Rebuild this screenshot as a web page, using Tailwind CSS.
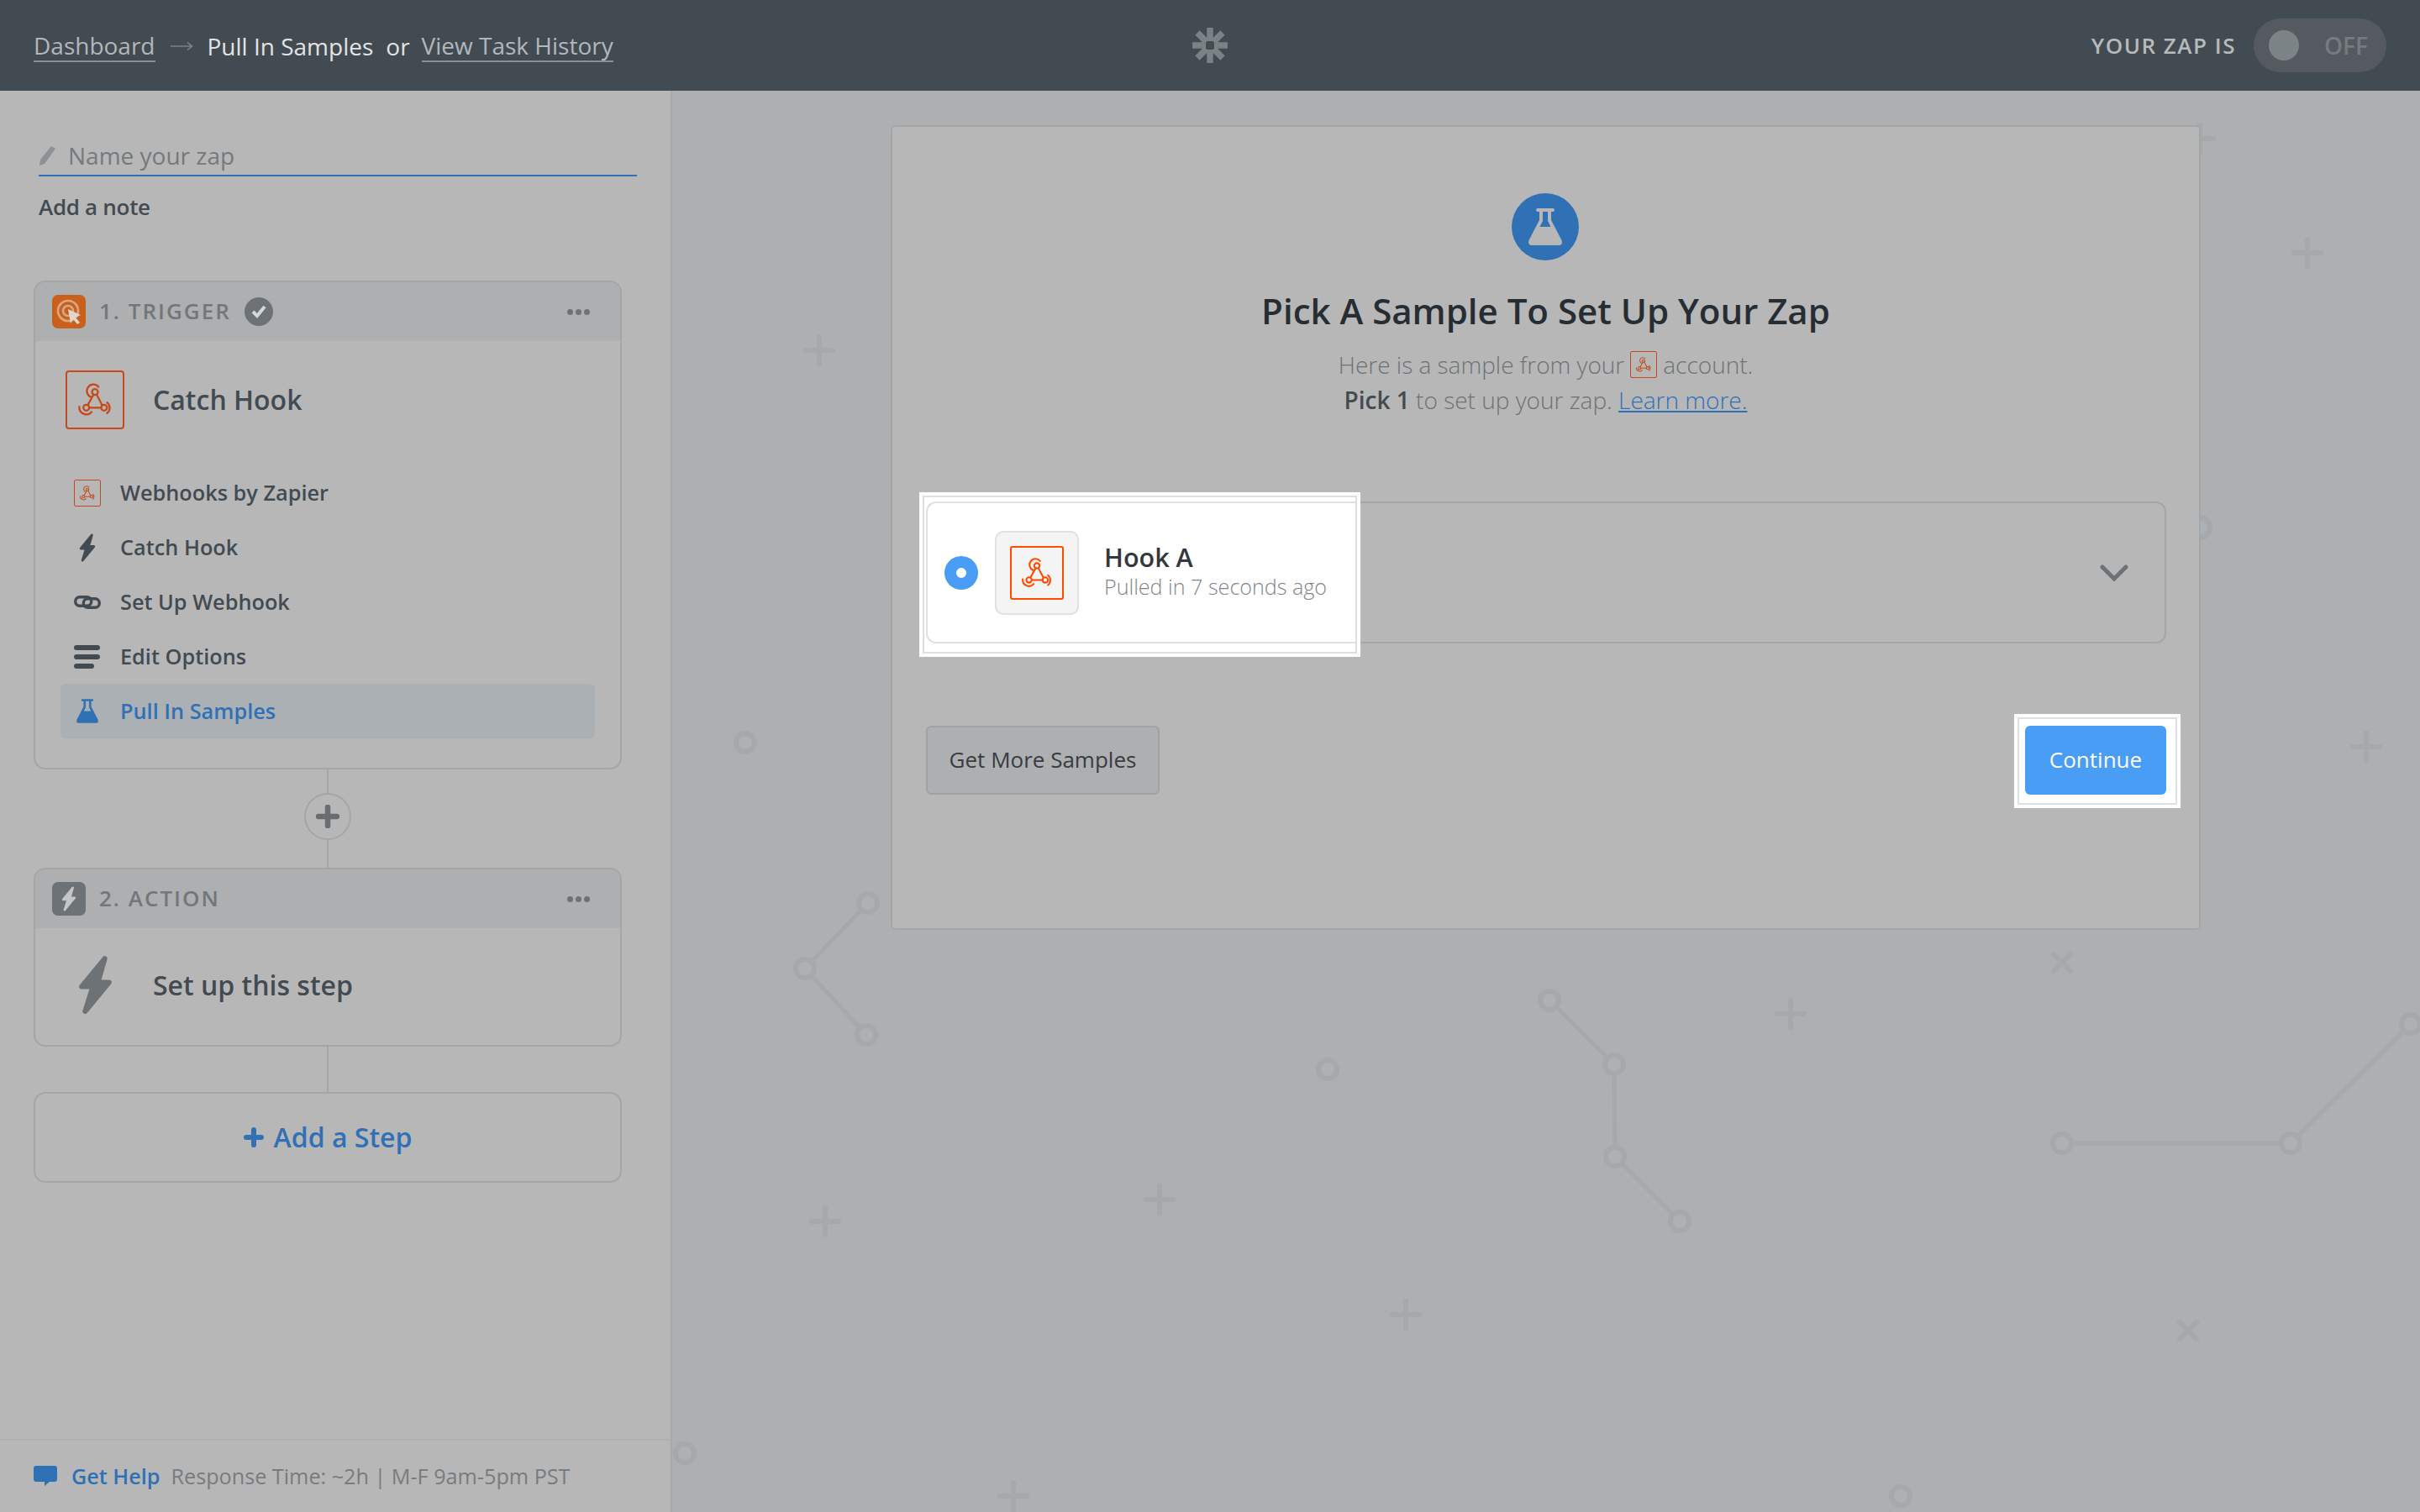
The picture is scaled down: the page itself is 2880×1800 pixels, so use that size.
<!DOCTYPE html>
<html>
<head>
<meta charset="utf-8">
<script src="https://cdn.jsdelivr.net/npm/@tailwindcss/browser@4"></script>
</head>
<body class="font-['Open_Sans',sans-serif] bg-[#adafb1] w-[2880px] h-[1800px] overflow-hidden">
<svg class="hidden">
  <symbol id="hook" viewBox="0 0 64 64">
    <g fill="none" stroke="currentColor" stroke-width="2.2" stroke-linecap="round">
      <circle cx="32" cy="23" r="3.4"/><circle cx="22" cy="41" r="3.4"/><circle cx="42.5" cy="41" r="3.4"/>
      <path d="M30.400 26 L24 37.500 M34 26 L40 37.500 M25.400 41 L39.100 41"/>
      <path d="M27 28.500 A7.500 7.500 0 1 1 36 17"/>
      <path d="M14 40 A8 8 0 0 0 28 46"/>
      <path d="M46 35 A8 8 0 0 1 46 47.500"/>
    </g>
  </symbol>
  <symbol id="bolt" viewBox="0 0 40 70">
    <path d="M31 4 L4 37 L17 37 L8 66 L36 32 L23 32 Z" fill="currentColor" stroke="currentColor" stroke-width="6" stroke-linejoin="round"/>
  </symbol>
  <symbol id="flask" viewBox="0 0 40 44">
    <path fill="currentColor" fill-rule="evenodd" d="M11 0H29a2 2 0 0 1 0 4H27V14L39.500 38Q41 44 36 44H4Q-1 44 .5 38L13 14V4H11a2 2 0 0 1 0-4ZM17 4V15L13.500 22H26.500L23 15V4Z"/>
  </symbol>
</svg>

<header class="h-[108px] bg-[#434b52] flex items-center justify-between relative pl-[40px] pr-[40px]">
  <div class="flex items-center text-[28px] leading-[40px] text-[#e3e3e3] pt-[2px]">
    <a class="text-[#b3b7ba] border-b-2 border-[#8b8f92] leading-[36px]">Dashboard</a>
    <span class="ml-[18px] mr-[17px] text-[#7c8286]"><svg width="27" height="14" viewBox="0 0 27 14"><path d="M0 7H25M20 2.500L25.500 7L20 11.500" fill="none" stroke="currentColor" stroke-width="1.600"/></svg></span>
    <span>Pull In Samples</span>
    <span class="ml-[15px] mr-[14px]">or</span>
    <a class="text-[#b3b7ba] border-b-2 border-[#8b8f92] leading-[36px]">View Task History</a>
  </div>
  <svg class="absolute left-[1418px] top-[32px]" width="44" height="44" viewBox="0 0 44 44">
    <path d="M22 1V43M1 22H43M7 7L37 37M37 7L7 37" stroke="#7b8285" stroke-width="7.500"/>
    <rect x="17" y="17" width="10" height="10" rx="2.500" fill="#434b52"/>
  </svg>
  <div class="flex items-center">
    <span class="text-[26px] font-semibold tracking-[1.500px] text-[#b7b9bb] mr-[21px]">YOUR ZAP IS</span>
    <div class="w-[158px] h-[64px] rounded-full bg-[#545a60] flex items-center pl-[18px]">
      <span class="w-[36px] h-[36px] rounded-full bg-[#7d8488]"></span>
      <span class="ml-[30px] text-[28px] font-semibold text-[#757b80]">OFF</span>
    </div>
  </div>
</header>

<div class="flex h-[1692px] relative">
  <svg class="absolute left-0 top-[-108px] pointer-events-none" width="2880" height="1800" viewBox="0 0 2880 1800">
    <g fill="none" stroke="#a5a9ab" stroke-width="5">
      <path d="M1033 1075 L958 1153 L1031 1232"/>
      <path d="M1844 1191 L1921 1267 L1922 1377 L1999 1454"/>
      <path d="M2454 1361 L2726 1361 L2869 1219"/>
      <g fill="#aeb1b3" stroke-width="6">
        <circle cx="1033" cy="1075" r="11"/><circle cx="958" cy="1153" r="11"/><circle cx="1031" cy="1232" r="11"/>
        <circle cx="1844" cy="1191" r="11"/><circle cx="1921" cy="1267" r="11"/><circle cx="1922" cy="1377" r="11"/><circle cx="1999" cy="1454" r="11"/>
        <circle cx="1580" cy="1273" r="11"/>
        <circle cx="2454" cy="1361" r="11"/><circle cx="2726" cy="1361" r="11"/><circle cx="2869" cy="1219" r="11"/>
        <circle cx="815" cy="1730" r="11"/><circle cx="2262" cy="1781" r="11"/><circle cx="887" cy="884" r="11"/><circle cx="2618" cy="628" r="12"/>
      </g>
      <g stroke-width="6" stroke-linecap="round">
        <path d="M2131 1191V1223M2115 1207H2147"/><path d="M1380 1412V1444M1364 1428H1396"/><path d="M982 1438V1470M966 1454H998"/>
        <path d="M1673 1549V1581M1657 1565H1689"/><path d="M1206 1765V1797M1190 1781H1222"/><path d="M975 401V433M959 417H991"/>
        <path d="M2746 285V317M2730 301H2762"/><path d="M2816 873V905M2800 889H2832"/><path d="M2618 149V181M2602 165H2634"/>
        <path d="M2444 1136L2464 1156M2464 1136L2444 1156"/><path d="M2594 1574L2614 1594M2614 1574L2594 1594"/>
      </g>
    </g>
  </svg>

  <aside class="relative w-[800px] bg-[#b7b7b7] border-r-2 border-[#a6a9ab] flex flex-col">
    <div class="pl-[46px] pr-[40px] pt-[56px]">
      <div class="h-[46px] border-b-2 border-[#3070b5] flex items-center gap-[13px] text-[28px] text-[#74797d] pb-[2px]">
        <svg width="22" height="24" viewBox="0 0 22 24"><path d="M15 1L20 4L7 22L1 24L2 17Z" fill="#8d9194"/></svg>
        <span>Name your zap</span>
      </div>
      <div class="mt-[18px] text-[26px] leading-[36px] tracking-[-0.3px] font-semibold text-[#434b52]">Add a note</div>
    </div>

    <div class="ml-[40px] w-[700px] mt-[70px]">
      <section class="rounded-[14px] border-2 border-[#a3a6a9] h-[582px]">
        <div class="h-[70px] rounded-t-[12px] bg-[#adafb1] flex items-center pl-[20px] pr-[36px]">
          <span class="w-[40px] h-[40px] rounded-[7px] bg-[#c9611c] flex items-center justify-center">
            <svg width="36" height="36" viewBox="0 0 36 36"><g fill="none" stroke="#d7a888" stroke-width="2.600"><circle cx="17" cy="17" r="12"/><circle cx="17" cy="17" r="6"/></g><path d="M17 15L32 22L26 25L31 31L28 33L23 27L20 32Z" fill="#e3d6cc"/></svg>
          </span>
          <span class="ml-[16px] pb-[2px] text-[26px] font-semibold tracking-[2px] text-[#72777b]">1. TRIGGER</span>
          <span class="ml-[16px] w-[34px] h-[34px] rounded-full bg-[#6d7276] flex items-center justify-center">
            <svg width="20" height="18" viewBox="0 0 20 18"><path d="M3 9L8 14L17 3" fill="none" stroke="#d4d6d7" stroke-width="4"/></svg>
          </span>
          <span class="ml-auto flex gap-[3px]"><i class="w-[7px] h-[7px] rounded-full bg-[#6d7276]"></i><i class="w-[7px] h-[7px] rounded-full bg-[#6d7276]"></i><i class="w-[7px] h-[7px] rounded-full bg-[#6d7276]"></i></span>
        </div>
        <div class="pl-[36px] pt-[35px] flex items-center">
          <span class="w-[70px] h-[70px] rounded-[4px] border-2 border-[#c8481a] text-[#c8481a]"><svg class="w-full h-full"><use href="#hook"/></svg></span>
          <span class="ml-[34px] text-[32px] font-semibold text-[#434b52]">Catch Hook</span>
        </div>
        <ul class="mt-[43px] mx-[30px] text-[25.3px] font-semibold text-[#434b52]">
          <li class="h-[65px] flex items-center pl-[16px]">
            <span class="w-[32px] h-[32px] border border-[#c8481a] text-[#c8481a] rounded-[2px]"><svg class="w-full h-full"><use href="#hook"/></svg></span>
            <span class="ml-[23px]">Webhooks by Zapier</span>
          </li>
          <li class="h-[65px] flex items-center pl-[16px]">
            <span class="w-[32px] flex justify-center"><svg class="w-[20px] h-[34px] text-[#434b52]"><use href="#bolt"/></svg></span>
            <span class="ml-[23px]">Catch Hook</span>
          </li>
          <li class="h-[65px] flex items-center pl-[16px]">
            <svg width="32" height="16" viewBox="0 0 32 16"><g fill="none" stroke="#434b52" stroke-width="3.400"><rect x="1.700" y="1.700" width="19" height="10.500" rx="5.200"/><rect x="11.300" y="3.800" width="19" height="10.500" rx="5.200"/></g></svg>
            <span class="ml-[23px]">Set Up Webhook</span>
          </li>
          <li class="h-[65px] flex items-center pl-[16px]">
            <span class="w-[32px] flex flex-col gap-[5px]">
              <i class="block h-[6px] w-[31px] rounded-full bg-[#434b52]"></i><i class="block h-[6px] w-[31px] rounded-full bg-[#434b52]"></i><i class="block h-[6px] w-[24px] rounded-full bg-[#434b52]"></i>
            </span>
            <span class="ml-[23px]">Edit Options</span>
          </li>
          <li class="h-[65px] flex items-center pl-[16px] rounded-[6px] bg-[#abb0b5] text-[#3070b5]">
            <span class="w-[32px] flex justify-center"><svg class="w-[26px] h-[29px] text-[#3070b5]"><use href="#flask"/></svg></span>
            <span class="ml-[23px]">Pull In Samples</span>
          </li>
        </ul>
      </section>

      <div class="relative h-[117px] flex flex-col items-center">
        <div class="w-[2px] h-[28px] bg-[#a3a6a9] shrink-0"></div>
        <div class="w-[56px] h-[56px] rounded-full border-2 border-[#a3a6a9] flex items-center justify-center shrink-0">
          <svg width="28" height="28" viewBox="0 0 28 28"><path d="M14 3V25M3 14H25" stroke="#686d71" stroke-width="6.500" stroke-linecap="round"/></svg>
        </div>
        <div class="w-[2px] h-[33px] bg-[#a3a6a9] shrink-0"></div>
      </div>

      <section class="rounded-[14px] border-2 border-[#a3a6a9] h-[213px]">
        <div class="h-[70px] rounded-t-[12px] bg-[#adafb1] flex items-center pl-[20px] pr-[36px]">
          <span class="w-[40px] h-[40px] rounded-[7px] bg-[#6d7276] flex items-center justify-center text-[#c4c6c7]"><svg class="w-[18px] h-[30px]"><use href="#bolt"/></svg></span>
          <span class="ml-[16px] pb-[2px] text-[26px] font-semibold tracking-[2px] text-[#72777b]">2. ACTION</span>
          <span class="ml-auto flex gap-[3px]"><i class="w-[7px] h-[7px] rounded-full bg-[#6d7276]"></i><i class="w-[7px] h-[7px] rounded-full bg-[#6d7276]"></i><i class="w-[7px] h-[7px] rounded-full bg-[#6d7276]"></i></span>
        </div>
        <div class="pl-[51px] pb-[4px] flex items-center h-[139px]">
          <svg class="w-[41px] h-[71px] text-[#6d7276]"><use href="#bolt"/></svg>
          <span class="ml-[48px] text-[32px] font-semibold text-[#434b52]">Set up this step</span>
        </div>
      </section>

      <div class="ml-[349px] w-[2px] h-[54px] bg-[#a3a6a9]"></div>

      <div class="h-[108px] rounded-[14px] border-2 border-[#a3a6a9] flex items-center justify-center text-[32px] font-semibold text-[#3070b5] gap-[12px]">
        <svg width="24" height="24" viewBox="0 0 24 24"><path d="M12 3V21M3 12H21" stroke="#3070b5" stroke-width="6" stroke-linecap="round"/></svg>
        <span>Add a Step</span>
      </div>
    </div>

    <footer class="mt-auto h-[87px] border-t-2 border-[#adafb1] flex items-center pl-[40px] text-[25.2px]">
      <svg width="28" height="26" viewBox="0 0 28 26"><path fill="#3070b5" d="M3 0H25Q28 0 28 3V16Q28 19 25 19H19L13 24V19H3Q0 19 0 16V3Q0 0 3 0Z"/></svg>
      <span class="ml-[17px] font-semibold text-[#3070b5]">Get Help</span>
      <span class="ml-[13px] text-[#777c80]">Response Time: ~2h | M-F 9am-5pm PST</span>
    </footer>
  </aside>

  <main class="relative flex-1">
    <section class="relative ml-[260px] mt-[41px] w-[1559px] h-[958px] rounded-[6px] bg-[#b7b7b7] border-2 border-[#a3a6a9]">
      <div class="flex flex-col items-center pt-[79px]">
        <span class="w-[80px] h-[80px] mr-[2px] rounded-full bg-[#3070b5] flex items-center justify-center">
          <svg class="w-[40px] h-[44px] text-[#b7b7b7]"><use href="#flask"/></svg>
        </span>
        <h1 class="mt-[30px] text-[42px] leading-[60px] font-semibold text-[#262d33]">Pick A Sample To Set Up Your Zap</h1>
        <p class="mt-[13px] text-[28px] leading-[42px] font-light text-[#6d7276] flex items-center">Here is a sample from your
          <span class="mx-[7px] w-[32px] h-[32px] border border-[#c8481a] text-[#c8481a] rounded-[2px] inline-block"><svg class="w-full h-full"><use href="#hook"/></svg></span>
          account.</p>
        <p class="text-[28px] leading-[42px] font-light text-[#6d7276]"><b class="font-semibold text-[#434b52]">Pick 1</b> to set up your zap. <a class="font-light text-[#3070b5] underline">Learn more.</a></p>
      </div>

      <div class="absolute left-[40px] top-[446px] w-[1476px] h-[169px] rounded-[12px] border-2 border-[#a3a6a9] flex items-center justify-end pr-[43px]">
        <svg width="34" height="20" viewBox="0 0 34 20"><path d="M3 3L17 17L31 3" fill="none" stroke="#6d7276" stroke-width="5" stroke-linecap="round"/></svg>
      </div>

      <div class="absolute left-[32px] top-[435px] w-[525px] h-[196px] bg-white p-[4px]">
        <div class="h-full border-2 border-[#dcdfe1] pt-[5px] pl-[2px]">
          <div class="h-[169px] rounded-l-[12px] border-2 border-r-0 border-[#dde1e4] flex items-center pl-[20px]">
            <span class="w-[40px] h-[40px] rounded-full bg-[#4a9df5] flex items-center justify-center"><i class="block w-[12px] h-[12px] rounded-full bg-white"></i></span>
            <span class="ml-[20px] w-[100px] h-[100px] rounded-[10px] bg-[#f4f4f4] border-2 border-[#dde1e4] flex items-center justify-center">
              <span class="w-[64px] h-[64px] border-2 border-[#ff4a00] rounded-[3px] text-[#ff4a00]"><svg class="w-full h-full"><use href="#hook"/></svg></span>
            </span>
            <span class="ml-[30px] flex flex-col pb-[4px]">
              <span class="text-[30.5px] leading-[37px] font-semibold text-[#32383e]">Hook A</span>
              <span class="text-[25.1px] leading-[33px] font-light text-[#7f858a]">Pulled in 7 seconds ago</span>
            </span>
          </div>
        </div>
      </div>

      <button class="absolute left-[40px] top-[713px] w-[278px] h-[82px] rounded-[6px] bg-[#adafb1] border-2 border-[#9fa2a5] text-[26px] text-[#383c40] pb-[2px]">Get More Samples</button>

      <div class="absolute left-[1335px] top-[699px] w-[198px] h-[112px] bg-white p-[4px]">
        <div class="h-full border-2 border-[#e0e0e0]"></div>
      </div>
      <button class="absolute left-[1348px] top-[713px] w-[168px] h-[82px] rounded-[6px] bg-[#4a9df5] text-[26px] text-white font-medium pb-[2px]">Continue</button>
    </section>
  </main>
</div>
</body>
</html>
